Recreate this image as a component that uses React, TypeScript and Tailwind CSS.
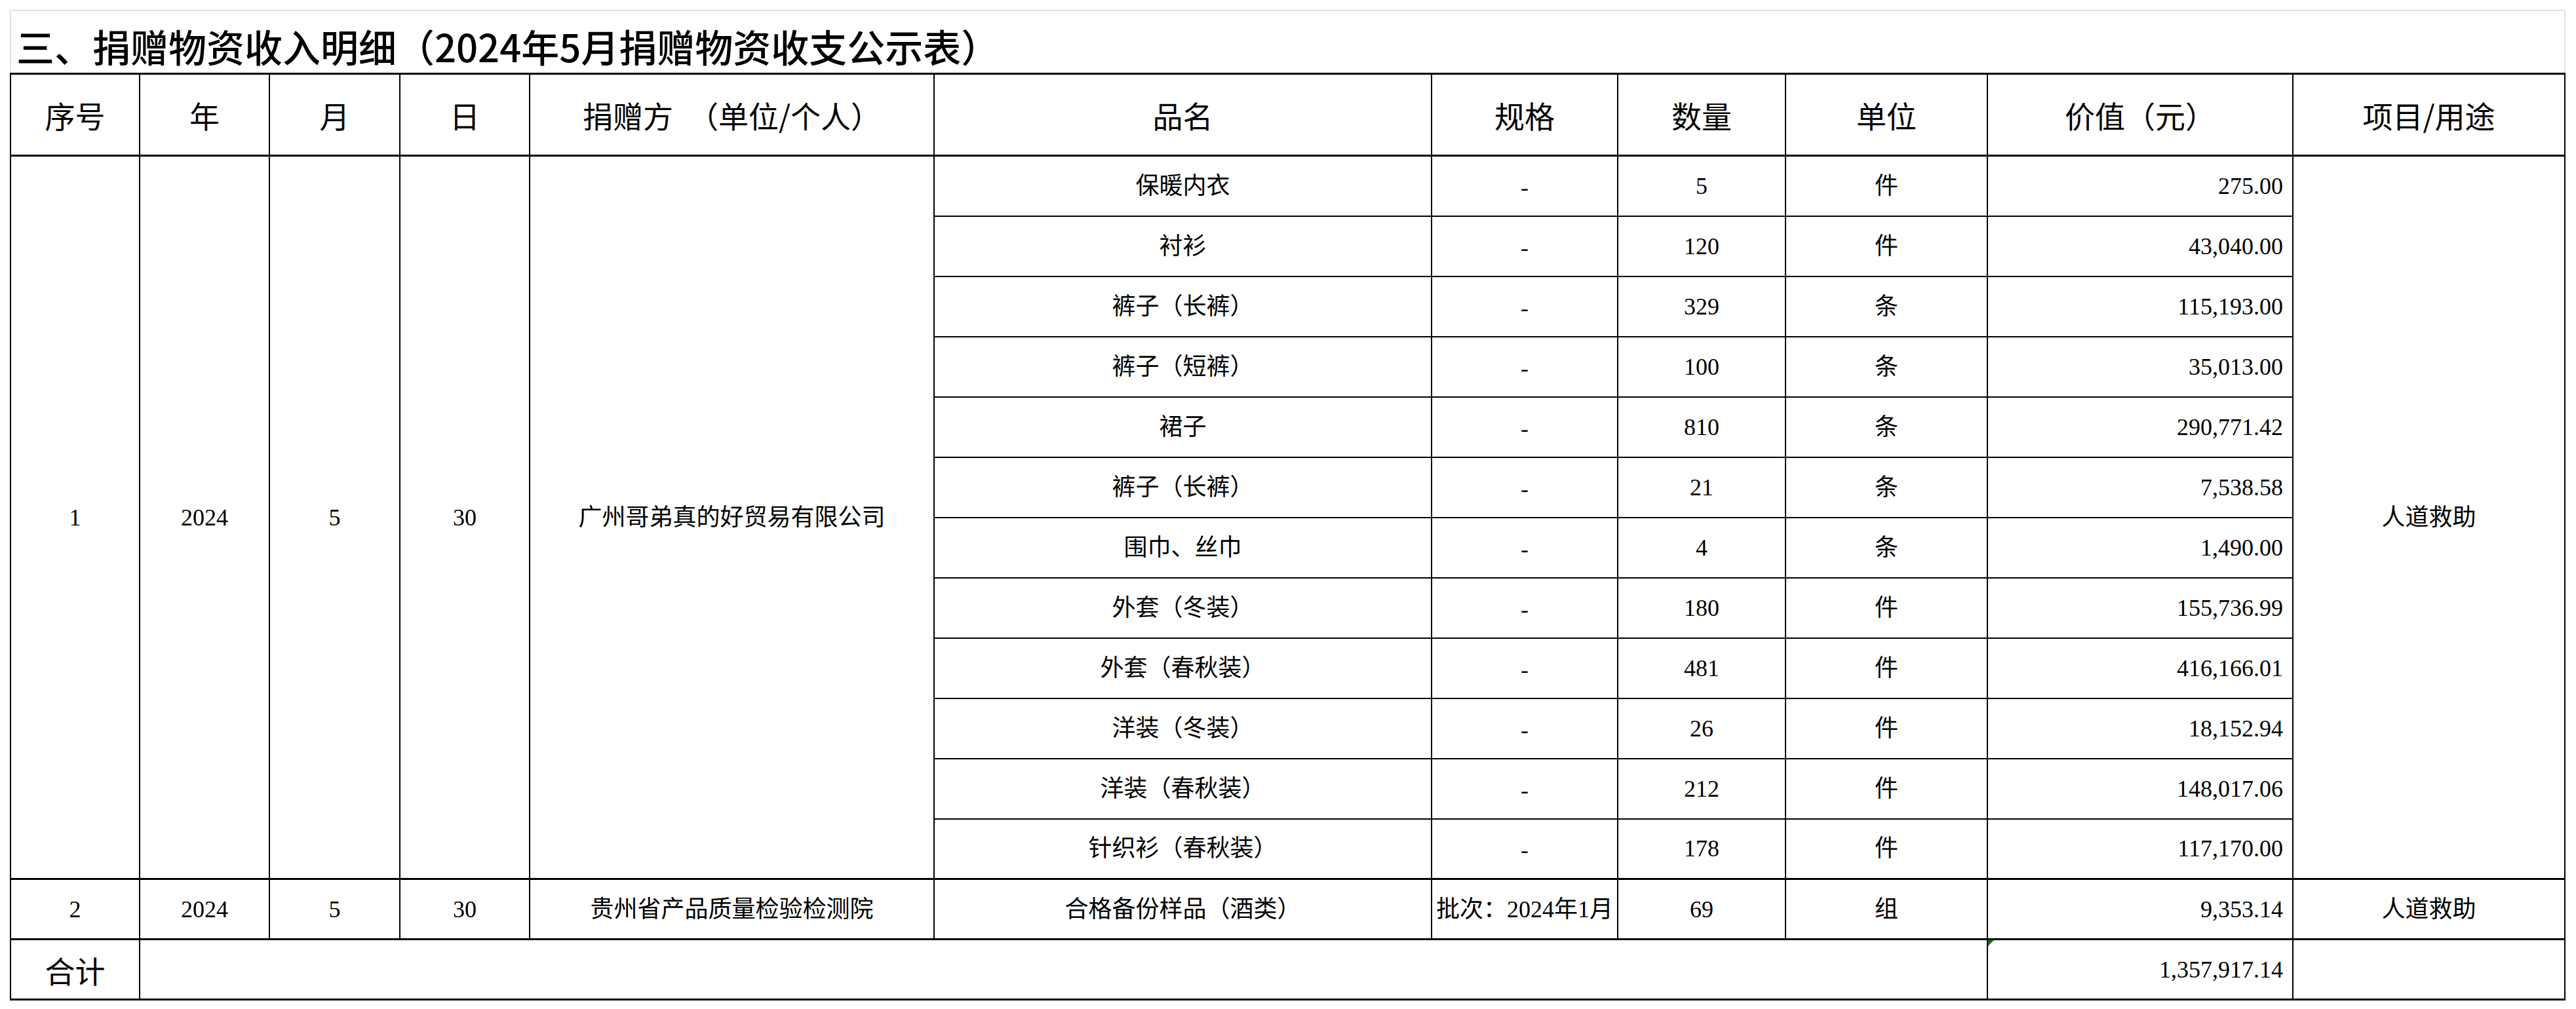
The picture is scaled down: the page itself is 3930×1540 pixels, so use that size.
const cjk = "font-['Noto_Sans_CJK_SC',sans-serif]"
const body = "font-['Liberation_Serif','Noto_Sans_CJK_SC',serif]"

const items = [
  ['保暖内衣', '5', '件', '275.00'],
  ['衬衫', '120', '件', '43,040.00'],
  ['裤子（长裤）', '329', '条', '115,193.00'],
  ['裤子（短裤）', '100', '条', '35,013.00'],
  ['裙子', '810', '条', '290,771.42'],
  ['裤子（长裤）', '21', '条', '7,538.58'],
  ['围巾、丝巾', '4', '条', '1,490.00'],
  ['外套（冬装）', '180', '件', '155,736.99'],
  ['外套（春秋装）', '481', '件', '416,166.01'],
  ['洋装（冬装）', '26', '件', '18,152.94'],
  ['洋装（春秋装）', '212', '件', '148,017.06'],
  ['针织衫（春秋装）', '178', '件', '117,170.00'],
]

const headers = ['序号', '年', '月', '日', '捐赠方　（单位/个人）', '品名', '规格', '数量', '单位', '价值（元）', '项目/用途']

const widths = ['w-[197px]', 'w-[198px]', 'w-[199px]', 'w-[198px]', 'w-[617px]', 'w-[759px]', 'w-[284px]', 'w-[256px]', 'w-[308px]', 'w-[466px]', 'w-[415px]']

const cell = 'border-2 border-black p-0 text-center'

export default function App() {
  return (
    <div className={`w-[3930px] h-[1540px] bg-white pt-[15px] pl-[15px] text-black ${body}`}>
      <div className="w-[3899px]">
        <div className={`h-[96px] border-t-2 border-x-2 border-[#e2e2e2] flex items-end pl-[8px] pb-[12px] text-[58px] leading-none font-medium ${cjk}`}>
          三、捐赠物资收入明细（2024年5月捐赠物资收支公示表）
        </div>
        <table className="w-full table-fixed border-collapse text-[36px] leading-none">
          <colgroup>
            {widths.map((w, i) => (
              <col key={i} className={w} />
            ))}
          </colgroup>
          <thead>
            <tr className="h-[125px]">
              {headers.map((h) => (
                <th key={h} className={`${cell} border-y-[3px] text-[46px] font-normal ${cjk}`}>
                  {h}
                </th>
              ))}
            </tr>
          </thead>
          <tbody>
            {items.map(([name, qty, unit, value], i) => (
              <tr key={i} className="h-[92px]">
                {i === 0 && (
                  <>
                    <td rowSpan={12} className={`${cell} border-b-[3px]`}>1</td>
                    <td rowSpan={12} className={`${cell} border-b-[3px]`}>2024</td>
                    <td rowSpan={12} className={`${cell} border-b-[3px]`}>5</td>
                    <td rowSpan={12} className={`${cell} border-b-[3px]`}>30</td>
                    <td rowSpan={12} className={`${cell} border-b-[3px]`}>广州哥弟真的好贸易有限公司</td>
                  </>
                )}
                <td className={`${cell} ${i === 11 ? 'border-b-[3px]' : ''}`}>{name}</td>
                <td className={`${cell} ${cjk} ${i === 11 ? 'border-b-[3px]' : ''}`}>-</td>
                <td className={`${cell} ${i === 11 ? 'border-b-[3px]' : ''}`}>{qty}</td>
                <td className={`${cell} ${i === 11 ? 'border-b-[3px]' : ''}`}>{unit}</td>
                <td className={`${cell} text-right pr-[14px] ${i === 11 ? 'border-b-[3px]' : ''}`}>{value}</td>
                {i === 0 && (
                  <td rowSpan={12} className={`${cell} border-b-[3px]`}>人道救助</td>
                )}
              </tr>
            ))}
            <tr className="h-[92px]">
              <td className={`${cell} border-b-[3px]`}>2</td>
              <td className={`${cell} border-b-[3px]`}>2024</td>
              <td className={`${cell} border-b-[3px]`}>5</td>
              <td className={`${cell} border-b-[3px]`}>30</td>
              <td className={`${cell} border-b-[3px]`}>贵州省产品质量检验检测院</td>
              <td className={`${cell} border-b-[3px]`}>合格备份样品（酒类）</td>
              <td className={`${cell} border-b-[3px] whitespace-nowrap`}>批次：2024年1月</td>
              <td className={`${cell} border-b-[3px]`}>69</td>
              <td className={`${cell} border-b-[3px]`}>组</td>
              <td className={`${cell} border-b-[3px] text-right pr-[14px]`}>9,353.14</td>
              <td className={`${cell} border-b-[3px]`}>人道救助</td>
            </tr>
            <tr className="h-[92px]">
              <td className={`${cell} border-b-[3px] text-[46px] ${cjk}`}>合计</td>
              <td colSpan={8} className={`${cell} border-b-[3px]`}></td>
              <td className={`${cell} border-b-[3px] text-right pr-[14px] relative`}>
                <span className="absolute left-0 top-0 w-0 h-0 border-t-[9px] border-t-[#0a7a0a] border-r-[9px] border-r-transparent" />
                1,357,917.14
              </td>
              <td className={`${cell} border-b-[3px]`}></td>
            </tr>
          </tbody>
        </table>
      </div>
    </div>
  )
}
